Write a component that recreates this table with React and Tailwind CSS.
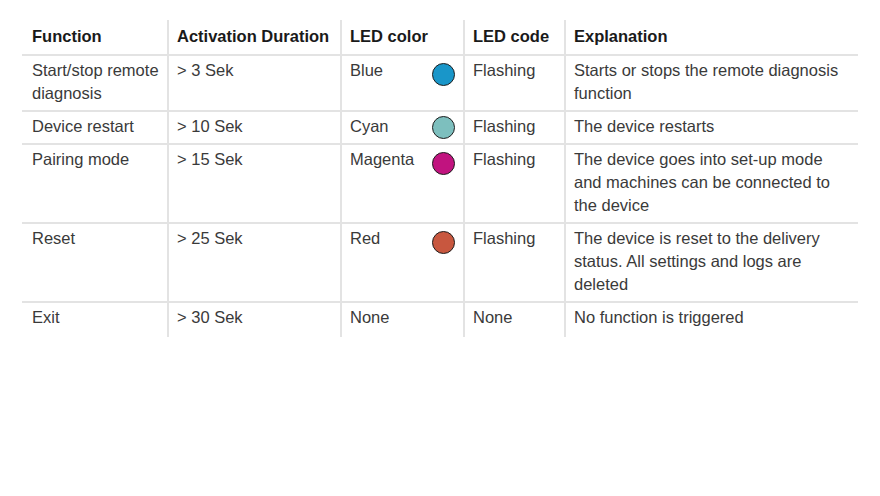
const rows = [
  {
    fn: "Start/stop remote diagnosis",
    dur: "> 3 Sek",
    color: "Blue",
    dot: "bg-[#1996c9] mt-[4px]",
    code: "Flashing",
    text: "Starts or stops the remote diagnosis function",
  },
  {
    fn: "Device restart",
    dur: "> 10 Sek",
    color: "Cyan",
    dot: "bg-[#7dbfbe] mt-[1px]",
    code: "Flashing",
    text: "The device restarts",
  },
  {
    fn: "Pairing mode",
    dur: "> 15 Sek",
    color: "Magenta",
    dot: "bg-[#c1137f] mt-[4px]",
    code: "Flashing",
    text: "The device goes into set-up mode and machines can be connected to the device",
  },
  {
    fn: "Reset",
    dur: "> 25 Sek",
    color: "Red",
    dot: "bg-[#c8573f] mt-[4px]",
    code: "Flashing",
    text: "The device is reset to the delivery status. All settings and logs are deleted",
  },
  {
    fn: "Exit",
    dur: "> 30 Sek",
    color: "None",
    dot: null,
    code: "None",
    text: "No function is triggered",
  },
]

const App = () => {
  return (
    <div className="w-[880px] h-[496px] bg-white pt-[20px] pl-[22px] font-['Liberation_Sans',Arial,sans-serif] text-[16.5px]">
      <table className="table-fixed w-[836px] border-separate border-spacing-0">
        <thead>
          <tr className="text-left font-bold text-[#1a1a1a] leading-[24px]">
            <th className="w-[145px] pl-[10px] pt-[4px] pb-[6px] border-b-2 border-[#e3e3e3]">Function</th>
            <th className="w-[173px] pl-[8px] pt-[4px] pb-[6px] border-b-2 border-l-2 border-[#e3e3e3]">Activation Duration</th>
            <th className="w-[123px] pl-[8px] pt-[4px] pb-[6px] border-b-2 border-l-2 border-[#e3e3e3]">LED color</th>
            <th className="w-[101px] pl-[8px] pt-[4px] pb-[6px] border-b-2 border-l-2 border-[#e3e3e3]">LED code</th>
            <th className="w-[294px] pl-[8px] pt-[4px] pb-[6px] border-b-2 border-l-2 border-[#e3e3e3]">Explanation</th>
          </tr>
        </thead>
        <tbody className="text-[#3a3a3a] leading-[23px]">
          {rows.map((r, i) => {
            const last = i === rows.length - 1
            const b = last ? "border-[#e3e3e3] pb-[8px]" : "border-b-2 border-[#e3e3e3] pb-[5px]"
            return (
              <tr key={r.fn} className="align-top">
                <td className={`pl-[10px] pr-[6px] pt-[3px] ${b}`}>{r.fn}</td>
                <td className={`pl-[8px] pt-[3px] border-l-2 ${b}`}>{r.dur}</td>
                <td className={`pl-[8px] pr-[8px] pt-[3px] border-l-2 ${b}`}>
                  <div className="flex justify-between items-start h-[23px]">
                    <span>{r.color}</span>
                    {r.dot && (
                      <span className={`w-[23px] h-[23px] shrink-0 rounded-full border-[1.5px] border-[#1e1e1e] ${r.dot}`}></span>
                    )}
                  </div>
                </td>
                <td className={`pl-[8px] pt-[3px] border-l-2 ${b}`}>{r.code}</td>
                <td className={`pl-[8px] pr-[14px] pt-[3px] border-l-2 ${b}`}>{r.text}</td>
              </tr>
            )
          })}
        </tbody>
      </table>
    </div>
  )
}

export default App
